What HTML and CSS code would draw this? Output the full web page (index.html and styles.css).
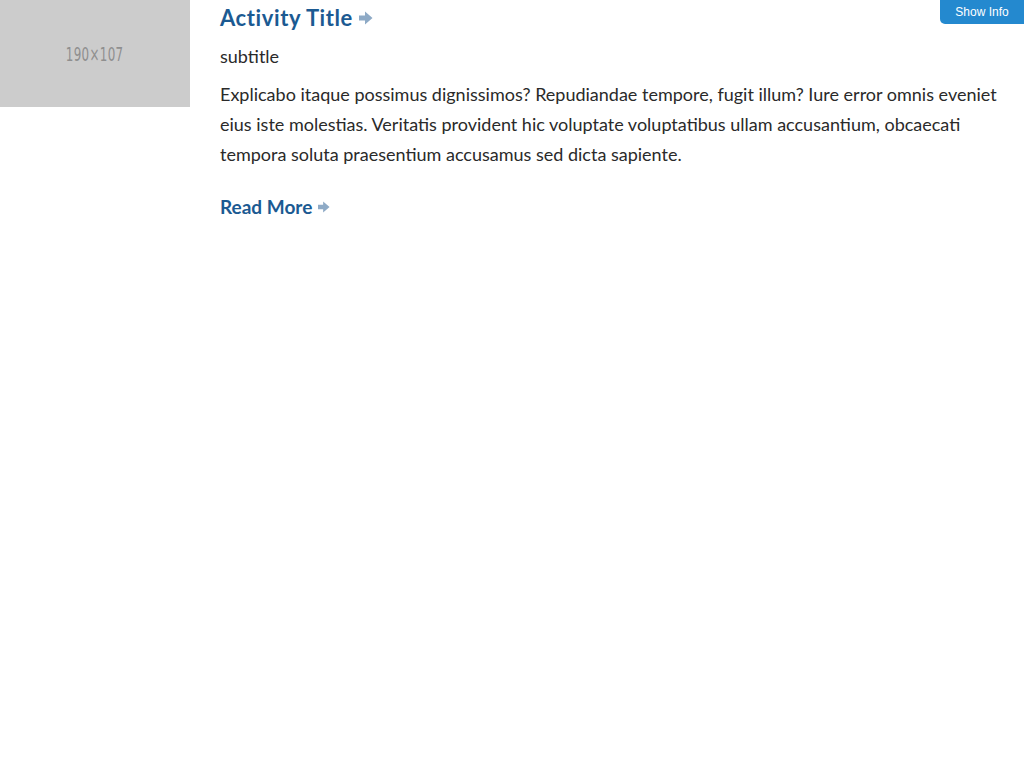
FILE: index.html
```html
<!DOCTYPE html>
<html>
<head>
<meta charset="utf-8">
<link rel="stylesheet" href="styles.css">
</head>
<body>
<div class="activity">
  <div class="thumb"><span class="thumb-label">190×107</span></div>
  <div class="content">
    <h2 class="title"><a href="#">Activity Title</a>
      <svg class="arrow" width="14" height="14" viewBox="0 0 14 14"><path d="M0 4.5h6V0.5L13.5 7 6 13.5V9.5H0z" fill="#8eaac6"/></svg>
    </h2>
    <p class="subtitle">subtitle</p>
    <p class="desc">Explicabo itaque possimus dignissimos? Repudiandae tempore, fugit illum? Iure error omnis eveniet eius iste molestias. Veritatis provident hic voluptate voluptatibus ullam accusantium, obcaecati tempora soluta praesentium accusamus sed dicta sapiente.</p>
    <a class="more" href="#">Read More
      <svg class="arrow small" width="12" height="12" viewBox="0 0 14 14"><path d="M0 4.5h6V0.5L13.5 7 6 13.5V9.5H0z" fill="#8eaac6"/></svg>
    </a>
  </div>
</div>
<button class="show-info">Show Info</button>
</body>
</html>
```
FILE: styles.css
```css
html, body {
  margin: 0;
  padding: 0;
  overflow-x: hidden;
  background: #fff;
}
body {
  font-family: Lato, "Open Sans", sans-serif;
  color: #222;
  width: 1024px;
}
.activity {
  display: flex;
  gap: 30px;
}
.thumb {
  width: 190px;
  height: 107px;
  flex: none;
  background: #cccccc;
  display: flex;
  align-items: center;
  justify-content: center;
}
.thumb-label {
  font-family: "DejaVu Sans Condensed", "DejaVu Sans", sans-serif;
  font-size: 20px;
  color: #8f8f8f;
  letter-spacing: 0.5px;
  display: inline-block;
  transform: scaleX(0.66);
}
.content {
  width: 804px;
  flex: none;
}
.title {
  margin: 4px 0 0;
  font-size: 22px;
  line-height: 28px;
  font-weight: 700;
  letter-spacing: 0.6px;
  display: flex;
  align-items: center;
  gap: 6px;
}
.title a {
  color: #1b5a92;
  text-decoration: none;
}
.subtitle {
  margin: 12px 0 0;
  font-size: 18px;
  line-height: 24px;
  color: #2a2a2a;
}
.desc {
  margin: 11px 0 0;
  font-size: 18px;
  line-height: 30px;
  color: #2a2a2a;
}
.more {
  display: inline-flex;
  align-items: center;
  gap: 6px;
  margin-top: 26px;
  color: #1b5a92;
  font-weight: 700;
  font-size: 19px;
  line-height: 24px;
  text-decoration: none;
}
.show-info {
  position: absolute;
  top: 0;
  right: 0;
  width: 84px;
  height: 24px;
  border: none;
  background: #2489cf;
  color: #fff;
  font-family: "Liberation Sans", Arial, sans-serif;
  font-size: 12px;
  border-radius: 0 0 0 5px;
  padding: 0;
}
```
